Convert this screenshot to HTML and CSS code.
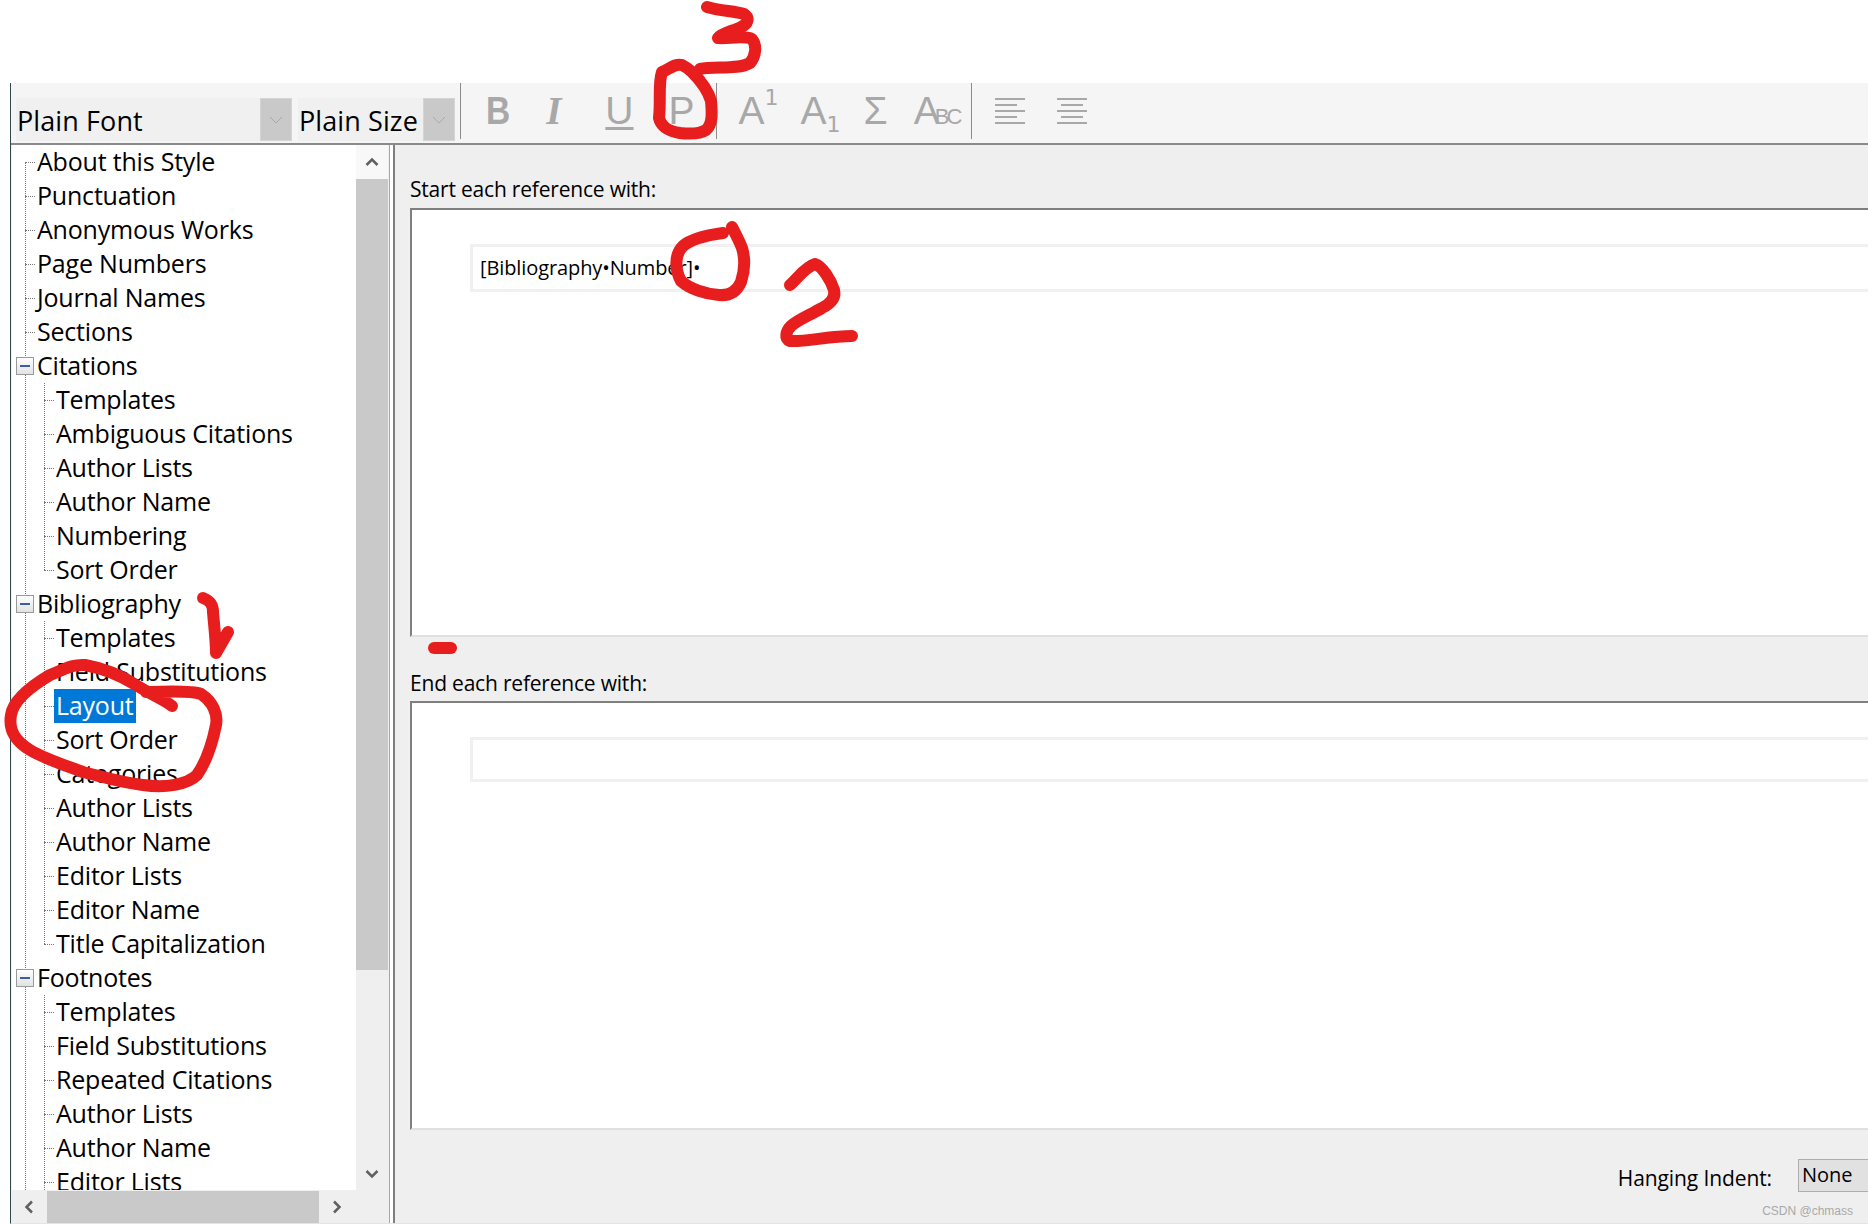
FILE: index.html
```html
<!DOCTYPE html>
<html lang="en">
<head>
  <meta charset="UTF-8" />
  <title>Output Style Editor</title>
  <link rel="stylesheet" href="styles.css">
</head>
<body>
  <div class="window">
    <div class="toolbar">
      <div class="combo combo-font"><span class="combo-text">Plain Font</span><span class="combo-btn"><svg width="14" height="8" viewBox="0 0 14 8"><path d="M1 1l6 6 6-6" fill="none" stroke="#a9a9a9"/></svg></span></div>
      <div class="combo combo-size"><span class="combo-text">Plain Size</span><span class="combo-btn"><svg width="14" height="8" viewBox="0 0 14 8"><path d="M1 1l6 6 6-6" fill="none" stroke="#a9a9a9"/></svg></span></div>
      <div class="sep sep-first"></div>
      <span class="tool tool-b">B</span>
      <span class="tool tool-i">I</span>
      <span class="tool tool-u">U</span>
      <span class="tool tool-p">P</span>
      <div class="sep sep-second"></div>
      <span class="tool tool-sup">A<sup>1</sup></span>
      <span class="tool tool-sub">A<sub>1</sub></span>
      <span class="tool tool-sigma">Σ</span>
      <span class="tool tool-abc">A<small>BC</small></span>
      <div class="sep sep-third"></div>
      <svg class="align align-left" width="30" height="28" viewBox="0 0 30 28"><path d="M0 1h30M0 7h22M0 13h30M0 19h22M0 25h30" stroke="#a8a8a8" stroke-width="2"/></svg>
      <svg class="align align-center" width="30" height="28" viewBox="0 0 30 28"><path d="M0 1h30M4 7h22M0 13h30M4 19h22M0 25h30" stroke="#a8a8a8" stroke-width="2"/></svg>
    </div>

    <div class="main">
      <div class="side">
        <div class="side-top">
          <div class="tree">
            <div class="row first"><span class="label">About this Style</span></div>
            <div class="row"><span class="label">Punctuation</span></div>
            <div class="row"><span class="label">Anonymous Works</span></div>
            <div class="row"><span class="label">Page Numbers</span></div>
            <div class="row"><span class="label">Journal Names</span></div>
            <div class="row"><span class="label">Sections</span></div>
            <div class="row open"><span class="toggle"></span><span class="label">Citations</span></div>
            <div class="row child"><span class="label">Templates</span></div>
            <div class="row child"><span class="label">Ambiguous Citations</span></div>
            <div class="row child"><span class="label">Author Lists</span></div>
            <div class="row child"><span class="label">Author Name</span></div>
            <div class="row child"><span class="label">Numbering</span></div>
            <div class="row child last"><span class="label">Sort Order</span></div>
            <div class="row open"><span class="toggle"></span><span class="label">Bibliography</span></div>
            <div class="row child"><span class="label">Templates</span></div>
            <div class="row child"><span class="label">Field Substitutions</span></div>
            <div class="row child"><span class="label selected">Layout</span></div>
            <div class="row child"><span class="label">Sort Order</span></div>
            <div class="row child"><span class="label">Categories</span></div>
            <div class="row child"><span class="label">Author Lists</span></div>
            <div class="row child"><span class="label">Author Name</span></div>
            <div class="row child"><span class="label">Editor Lists</span></div>
            <div class="row child"><span class="label">Editor Name</span></div>
            <div class="row child last"><span class="label">Title Capitalization</span></div>
            <div class="row open"><span class="toggle"></span><span class="label">Footnotes</span></div>
            <div class="row child"><span class="label">Templates</span></div>
            <div class="row child"><span class="label">Field Substitutions</span></div>
            <div class="row child"><span class="label">Repeated Citations</span></div>
            <div class="row child"><span class="label">Author Lists</span></div>
            <div class="row child"><span class="label">Author Name</span></div>
            <div class="row child"><span class="label">Editor Lists</span></div>
          </div>
          <div class="vscroll">
            <div class="vscroll-up"><svg width="14" height="10" viewBox="0 0 14 10"><path d="M1.5 8L7 2.5 12.500 8" fill="none" stroke="#606060" stroke-width="2.500"/></svg></div>
            <div class="vscroll-thumb"></div>
            <div class="vscroll-down"><svg width="14" height="10" viewBox="0 0 14 10"><path d="M1.5 2L7 7.500 12.500 2" fill="none" stroke="#606060" stroke-width="2.500"/></svg></div>
          </div>
        </div>
        <div class="hscroll">
          <div class="hscroll-btn"><svg width="10" height="14" viewBox="0 0 10 14"><path d="M8 1.500L2.500 7 8 12.500" fill="none" stroke="#606060" stroke-width="2.500"/></svg></div>
          <div class="hscroll-thumb"></div>
          <div class="hscroll-btn"><svg width="10" height="14" viewBox="0 0 10 14"><path d="M2 1.500L7.500 7 2 12.500" fill="none" stroke="#606060" stroke-width="2.500"/></svg></div>
        </div>
      </div>

      <div class="pane">
        <div class="pane-label">Start each reference with:</div>
        <div class="box">
          <div class="line line-start">[Bibliography•Number]•</div>
        </div>
        <div class="pane-label pane-label-end">End each reference with:</div>
        <div class="box">
          <div class="line"></div>
        </div>
        <div class="pane-foot">
          <span class="foot-label">Hanging Indent:</span>
          <span class="foot-select">None</span>
        </div>
      </div>
    </div>
  </div>

  <div class="watermark">CSDN @chmass</div>

  <svg class="ink" width="1868" height="1225" viewBox="0 0 1868 1225">
    <g fill="none" stroke="#e81e1e" stroke-width="12" stroke-linecap="round" stroke-linejoin="round">
      <path d="M707 7C720 11 735 11 744 14 750 18 748 24 741 27 733 31 722 33 718 38 728 39 744 35 752 39 757 45 756 56 750 63 738 70 715 66 700 69"/>
      <path d="M682 65C675 63 668 70 662 72 658 84 661 100 659 118 661 127 668 131 680 133 690 134 700 134 706 130 713 124 712 112 711 101 708 90 700 80 692 72 688 68 684 66 682 65"/>
      <path d="M723 233C708 235 692 238 683 246 673 256 676 272 681 281 690 289 705 294 719 295 730 296 737 291 741 282 745 270 745 258 742 248 739 240 735 233 732 227"/>
      <path d="M790 285C797 279 805 267 815 264 822 266 831 280 834 290 836 298 830 304 822 308 810 315 797 320 791 326 786 331 784 339 790 341 805 342 830 336 852 336"/>
      <path d="M203 598C211 601 213 605 213 612 214 625 216 640 216 653 220 646 224 639 228 632"/>
      <path d="M146 692C165 692 190 690 201 694 213 702 218 714 216 725 212 745 206 762 197 775 187 785 165 788 143 785 118 782 100 776 83 772 64 765 43 758 30 750 17 742 8 732 11 715 13 702 28 688 50 675 65 669 73 664 85 665 102 668 120 675 136 685 150 694 165 700 172 706"/>
      <path d="M434 648H451"/>
    </g>
  </svg>
</body>
</html>
```

FILE: styles.css
```css
* {
  box-sizing: border-box;
}

html, body {
  margin: 0;
  height: 100%;
}

body {
  width: 1868px;
  height: 1225px;
  overflow: hidden;
  background: #fff;
  color: #000;
  font-family: 'Open Sans', sans-serif;
  position: relative;
}

.window {
  margin: 83px 0 0 10px;
  height: 1141px;
  border-left: 1px solid #2c4a4a;
  border-bottom: 1px solid #e4e4e4;
  display: flex;
  flex-direction: column;
}

/* toolbar */
.toolbar {
  height: 62px;
  flex: none;
  background: #f5f5f5;
  border-bottom: 2px solid #8a8a8a;
  display: flex;
  align-items: flex-start;
}

.combo {
  margin-top: 15px;
  height: 43px;
  background: #f0f0f0;
  display: flex;
  justify-content: space-between;
  font-size: 27px;
}

.combo-font {
  width: 276px;
  margin-left: 5px;
}

.combo-size {
  width: 157px;
  margin-left: 6px;
}

.combo-text {
  padding: 0 0 0 1px;
  line-height: 46px;
  letter-spacing: 0.1px;
}

.combo-btn {
  width: 32px;
  background: #c9c9c9;
  border: 1px solid #d4d4d4;
  display: flex;
  align-items: center;
  justify-content: center;
}

.sep {
  width: 1px;
  height: 56px;
  background: #8c8c8c;
  flex: none;
}

.sep-first { margin-left: 5px; }
.sep-second { margin-left: 21px; }
.sep-third { margin-left: 12px; }

.tool {
  color: #a8a8a8;
  font-family: 'Liberation Sans', sans-serif;
  font-size: 39px;
  line-height: 44px;
  margin-top: 6px;
  flex: none;
}

.tool-b {
  font-weight: bold;
  margin-left: 23px;
  transform: scaleX(0.86);
}

.tool-i {
  font-family: 'Liberation Serif', serif;
  font-style: italic;
  font-weight: bold;
  margin-left: 34px;
}

.tool-u {
  text-decoration: underline;
  text-decoration-thickness: 3px;
  text-underline-offset: 3px;
  margin-left: 44px;
}

.tool-p {
  margin-left: 35px;
}

.tool-sup {
  margin-left: 22px;
}

.tool-sup sup, .tool-sub sub {
  font-family: 'DejaVu Sans', sans-serif;
  font-size: 22px;
  line-height: 0;
}

.tool-sup sup {
  vertical-align: 19px;
}

.tool-sub {
  margin-left: 22px;
}

.tool-sub sub {
  vertical-align: -8px;
}

.tool-sigma {
  margin-left: 23px;
}

.tool-abc {
  margin-left: 26px;
  letter-spacing: -5px;
}

.tool-abc small {
  font-size: 22px;
  letter-spacing: -3px;
}

.align {
  margin-top: 15px;
  flex: none;
}

.align-left { margin-left: 23px; }
.align-center { margin-left: 32px; }

/* left side */
.main {
  flex: 1;
  display: flex;
  min-height: 0;
}

.side {
  width: 379px;
  flex: none;
  background: #efefef;
  border-right: 1px solid #a8a8a8;
  display: flex;
  flex-direction: column;
}

.side-top {
  height: 1045px;
  flex: none;
  display: flex;
}

.tree {
  width: 344px;
  margin-left: 1px;
  flex: none;
  overflow: hidden;
  background: #fff;
  font-size: 25px;
  letter-spacing: -0.2px;
}

.row {
  height: 34px;
  padding-left: 13px;
  display: flex;
  align-items: center;
  white-space: nowrap;
  --dots: linear-gradient(#777 50%, transparent 50%);
  background-image: var(--dots);
  background-size: 1px 2px;
  background-position: 13px 0;
  background-repeat: repeat-y;
}

.row::before {
  content: "";
  width: 10px;
  flex: none;
  border-top: 1px dotted #777;
}

.row.first {
  background-image: linear-gradient(#fff, #fff), var(--dots);
  background-size: 1px 17px, 1px 2px;
  background-position: 13px 0, 13px 0;
  background-repeat: no-repeat, repeat-y;
}

.row.open {
  padding-left: 4px;
  background-position: 13px 0;
}

.row.open::before {
  display: none;
}

.row.child {
  padding-left: 32px;
  background-image: var(--dots), var(--dots);
  background-size: 1px 2px, 1px 2px;
  background-position: 13px 0, 32px 0;
  background-repeat: repeat-y, repeat-y;
}

.row.child.last {
  background-image: var(--dots), linear-gradient(#fff, #fff), var(--dots);
  background-size: 1px 2px, 1px 17px, 1px 2px;
  background-position: 13px 0, 32px 17px, 32px 0;
  background-repeat: repeat-y, no-repeat, repeat-y;
}

.toggle {
  width: 18px;
  height: 18px;
  margin-right: 1px;
  flex: none;
  border: 1px solid #9a9a9a;
  background:
    linear-gradient(#3f5cab, #3f5cab) center / 10px 2px no-repeat,
    linear-gradient(#fff, #e2e2e2);
}

.label {
  padding: 0 2px 2px;
  line-height: 32px;
}

.label.selected {
  background: #0078d7;
  color: #fff;
}

/* scrollbars */
.vscroll {
  width: 32px;
  flex: none;
  display: flex;
  flex-direction: column;
}

.vscroll-up {
  height: 34px;
  background: #f8f8f8;
  display: flex;
  align-items: center;
  justify-content: center;
}

.vscroll-thumb {
  height: 791px;
  background: #c9c9c9;
}

.vscroll-down {
  flex: 1;
  padding-bottom: 11px;
  display: flex;
  align-items: flex-end;
  justify-content: center;
}

.hscroll {
  flex: 1;
  display: flex;
  align-items: stretch;
  padding-top: 1px;
}

.hscroll-btn {
  width: 36px;
  display: flex;
  align-items: center;
  justify-content: center;
}

.hscroll-thumb {
  width: 272px;
  background: #c9c9c9;
}

/* right pane */
.pane {
  flex: 1;
  margin-left: 3px;
  border-left: 2px solid #7f7f7f;
  background: #efefef;
  padding: 33px 0 0 15px;
  min-width: 0;
  font-size: 21px;
}

.pane-label {
  height: 22px;
  line-height: 22px;
  margin-bottom: 8px;
  letter-spacing: -0.2px;
}

.pane-label-end {
  margin-top: 35px;
  margin-bottom: 7px;
}

.box {
  height: 429px;
  background: #fff;
  border-top: 2px solid #7f7f7f;
  border-left: 2px solid #7f7f7f;
  border-bottom: 2px solid #e0e0e0;
  padding: 34px 0 0 58px;
}

.line {
  height: 45px;
  border: 3px solid #f0f0f0;
  border-right: 0;
  padding-left: 7px;
  font-size: 20px;
  line-height: 41px;
  letter-spacing: -0.1px;
}

.line-start {
  height: 48px;
}

.pane-foot {
  margin-top: 29px;
  display: flex;
  align-items: center;
  justify-content: flex-end;
}

.foot-label {
  margin-right: 26px;
  padding-top: 5px;
  letter-spacing: -0.1px;
}

.foot-select {
  width: 70px;
  height: 33px;
  padding-left: 3px;
  font-size: 20px;
  line-height: 30px;
  background: #e1e1e1;
  border: 1px solid #adadad;
  border-right: 0;
}

.watermark {
  position: absolute;
  right: 15px;
  bottom: 6px;
  font-family: 'Liberation Sans', sans-serif;
  font-size: 12px;
  line-height: 16px;
  color: #a9a9a9;
}

.ink {
  position: absolute;
  left: 0;
  top: 0;
  pointer-events: none;
}
```
